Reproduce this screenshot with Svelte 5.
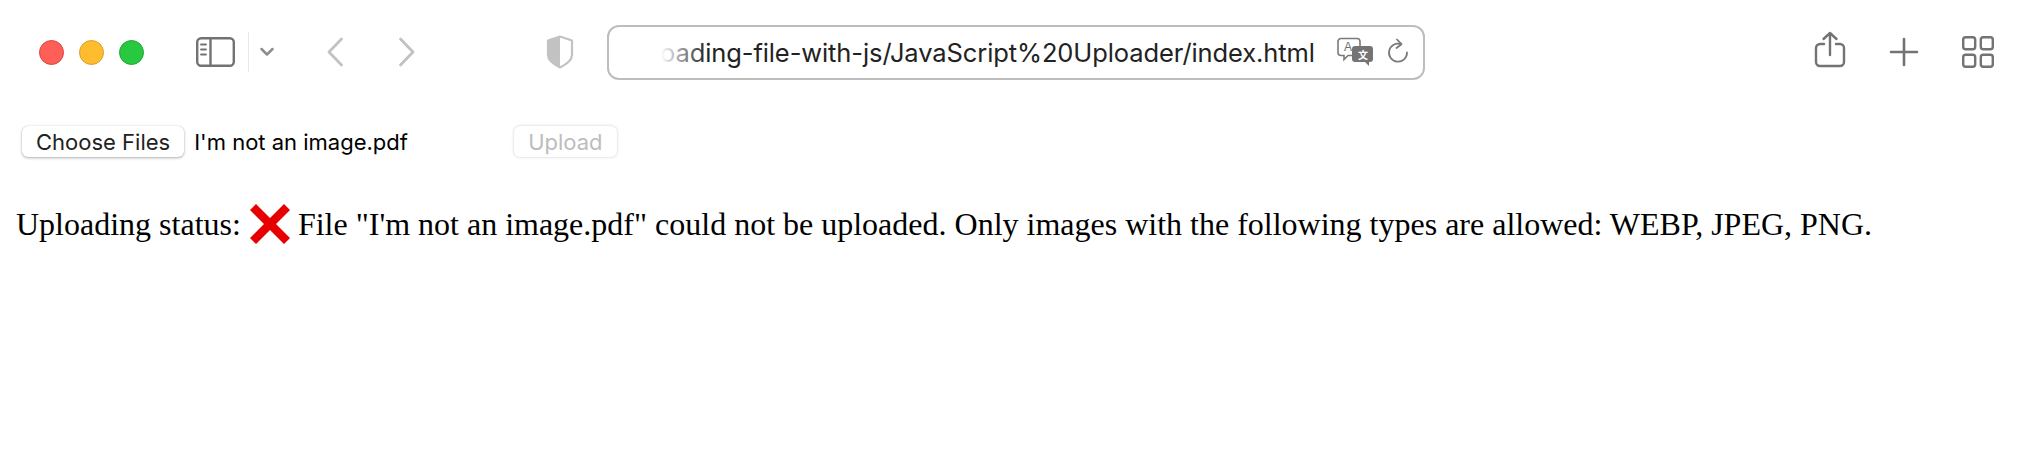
<script>
  const traffic = ['red', 'amber', 'green'];
</script>

<div class="page">
  <header class="toolbar">
    <div class="traffic">
      {#each traffic as t}
        <span class="dot {t}"></span>
      {/each}
    </div>

    <div class="sidebar-group">
      <svg class="sidebar" width="39" height="30" viewBox="0 0 39 30" fill="none">
        <rect x="1.2" y="1.2" width="36.6" height="27.6" rx="4" stroke="#727272" stroke-width="2.4"/>
        <path d="M14.5 2v26" stroke="#727272" stroke-width="2.4"/>
        <path d="M5 7.5h5M5 12.5h5M5 17.5h5" stroke="#727272" stroke-width="1.8" stroke-linecap="round"/>
      </svg>
      <span class="divider"></span>
      <svg class="chev" width="16" height="12" viewBox="0 0 16 12" fill="none">
        <path d="M2.5 3l5.5 5.5L13.500 3" stroke="#8e8e8e" stroke-width="2.500" stroke-linecap="round" stroke-linejoin="round"/>
      </svg>
    </div>

    <div class="nav">
      <svg width="18" height="32" viewBox="0 0 18 32" fill="none">
        <path d="M15.500 3L3 16l12.500 13" stroke="#c2c2c2" stroke-width="2.800" stroke-linecap="round" stroke-linejoin="round"/>
      </svg>
      <svg width="18" height="32" viewBox="0 0 18 32" fill="none">
        <path d="M2.500 3L15 16 2.500 29" stroke="#c2c2c2" stroke-width="2.800" stroke-linecap="round" stroke-linejoin="round"/>
      </svg>
    </div>

    <svg class="shield" width="28" height="34" viewBox="0 0 28 34" fill="none">
      <path d="M14 1.500L26 5.500V20c0 5-5 9-12 12.500C7 29 2 25 2 20V5.500z" stroke="#c2c2c2" stroke-width="2.200" stroke-linejoin="round"/>
      <path d="M14 1.500V32.500C7 29 2 25 2 20V5.500z" fill="#c2c2c2"/>
    </svg>

    <div class="urlbar">
      <span class="url"><span class="fade"></span>oading-file-with-js/JavaScript%20Uploader/index.html</span>
      <svg class="translate" width="38" height="30" viewBox="0 0 38 30" fill="none">
        <path d="M4 1.500h16a3 3 0 0 1 3 3v11a3 3 0 0 1-3 3h-9l-4 4v-4H4a3 3 0 0 1-3-3v-11a3 3 0 0 1 3-3z" fill="#fff" stroke="#7a7a7a" stroke-width="1.600"/>
        <text x="7" y="14" class="glyph-a">A</text>
        <path d="M18 9h15a3 3 0 0 1 3 3v10a3 3 0 0 1-3 3h-1v4l-4-4H18a3 3 0 0 1-3-3V12a3 3 0 0 1 3-3z" fill="#747474"/>
        <text x="21" y="22" class="glyph-x">文</text>
      </svg>
      <svg class="reload" width="22" height="28" viewBox="0 0 22 28" fill="none">
        <path d="M14 6.200A9 9 0 1 0 20 14.500" stroke="#7a7a7a" stroke-width="1.800" stroke-linecap="round"/>
        <path d="M10 1.500l4.500 4.700L9.500 10" stroke="#7a7a7a" stroke-width="1.800" stroke-linecap="round" stroke-linejoin="round"/>
      </svg>
    </div>

    <div class="actions">
      <svg class="share" width="32" height="38" viewBox="0 0 32 38" fill="none">
        <path d="M10 13H6a4 4 0 0 0-4 4v14a4 4 0 0 0 4 4h20a4 4 0 0 0 4-4V17a4 4 0 0 0-4-4h-4" stroke="#737373" stroke-width="2.400" stroke-linecap="round"/>
        <path d="M16 24V2M9.500 8L16 2l6.500 6" stroke="#737373" stroke-width="2.400" stroke-linecap="round" stroke-linejoin="round"/>
      </svg>
      <svg width="30" height="30" viewBox="0 0 30 30" fill="none">
        <path d="M15 2v26M2 15h26" stroke="#737373" stroke-width="2.600" stroke-linecap="round"/>
      </svg>
      <svg width="32" height="32" viewBox="0 0 32 32" fill="none">
        <rect x="1.200" y="1.200" width="12" height="12" rx="2.500" stroke="#737373" stroke-width="2.400"/>
        <rect x="18.800" y="1.200" width="12" height="12" rx="2.500" stroke="#737373" stroke-width="2.400"/>
        <rect x="1.200" y="18.800" width="12" height="12" rx="2.500" stroke="#737373" stroke-width="2.400"/>
        <rect x="18.800" y="18.800" width="12" height="12" rx="2.500" stroke="#737373" stroke-width="2.400"/>
      </svg>
    </div>
  </header>

  <main class="content">
    <div class="uploader">
      <button class="btn">Choose Files</button>
      <span class="filename">I'm not an image.pdf</span>
      <button class="btn disabled" disabled>Upload</button>
    </div>
    <p class="status">Uploading status: <svg class="cross" width="44" height="42" viewBox="0 0 44 42"><path d="M2 7L8 1l14 14L36 1l6 6-14 14 14 14-6 6-14-14L8 41l-6-6 14-14z" fill="#e60000"/></svg> File "I'm not an image.pdf" could not be uploaded. Only images with the following types are allowed: WEBP, JPEG, PNG.</p>
  </main>
</div>

<style>
  :global(body) {
    margin: 0;
    background: #fff;
  }
  .page {
    width: 2032px;
    height: 466px;
    overflow: hidden;
    background: #fff;
  }
  .toolbar {
    display: flex;
    align-items: center;
    height: 104px;
    padding-left: 39px;
    box-sizing: border-box;
  }
  .traffic {
    display: flex;
    gap: 15px;
  }
  .dot {
    width: 25px;
    height: 25px;
    border-radius: 50%;
    box-sizing: border-box;
    border: 1px solid;
  }
  .red { background: #ff5f57; border-color: #d9453f; }
  .amber { background: #febc2e; border-color: #d99e27; }
  .green { background: #28c840; border-color: #1fa832; }
  .sidebar-group {
    display: flex;
    align-items: center;
    margin-left: 52px;
  }
  .divider {
    width: 1px;
    height: 40px;
    background: #e8e8e8;
    margin: 0 10px 0 13px;
  }
  .nav {
    display: flex;
    gap: 54px;
    margin-left: 51px;
  }
  .shield {
    margin-left: 130px;
  }
  .urlbar {
    display: flex;
    align-items: center;
    width: 818px;
    height: 55px;
    box-sizing: border-box;
    margin-left: 33px;
    border: 2px solid #bdbdbd;
    border-radius: 12px;
    padding-left: 51px;
    gap: 12px;
  }
  .url {
    position: relative;
    font: 25.5px Inter, "Liberation Sans", Arial, sans-serif;
    letter-spacing: -0.1px;
    color: #222;
    white-space: nowrap;
  }
  .fade {
    position: absolute;
    left: -4px;
    top: 0;
    bottom: 0;
    width: 50px;
    background: linear-gradient(to right, #fff 10%, rgba(255, 255, 255, 0));
  }
  .translate {
    margin-left: 10px;
  }
  .glyph-a {
    font: 12px "Liberation Sans", sans-serif;
    fill: #6e6e6e;
  }
  .glyph-x {
    font: bold 10px "Noto Sans CJK SC", sans-serif;
    fill: #fff;
  }
  .actions {
    display: flex;
    align-items: center;
    gap: 43px;
    margin-left: auto;
    margin-right: 38px;
  }
  .share {
    margin-bottom: 4px;
  }
  .content {
    padding: 22px 16px 0 16px;
  }
  .uploader {
    display: flex;
    align-items: center;
    font: 22px Inter, "Liberation Sans", Arial, sans-serif;
    color: #000;
  }
  .btn {
    height: 31px;
    padding: 0 14px;
    margin: 0 0 0 6px;
    background: #fff;
    border: 0;
    border-radius: 6px;
    box-shadow: 0 1px 3px rgba(0, 0, 0, 0.3), 0 0 1px rgba(0, 0, 0, 0.2);
    font: 22px Inter, "Liberation Sans", Arial, sans-serif;
    color: #222;
  }
  .disabled {
    color: #bdbdbd;
    box-shadow: 0 0 3px rgba(0, 0, 0, 0.22);
    margin-left: 106px;
  }
  .filename {
    margin-left: 10px;
    width: 214px;
    white-space: nowrap;
  }
  .status {
    margin: 49px 0 0;
    font: 32px "Liberation Serif", "Times New Roman", serif;
    color: #000;
    white-space: nowrap;
  }
  .cross {
    vertical-align: -6px;
    margin: -4px -2px -4px -1px;
  }
</style>
